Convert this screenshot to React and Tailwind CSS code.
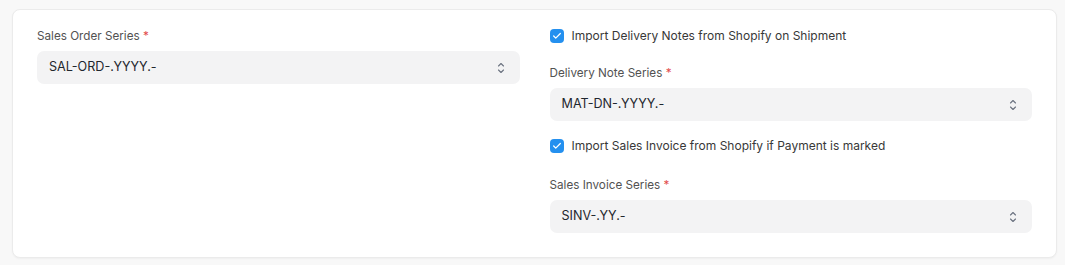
import { Check } from "lucide-react";

function SelectBox({ value }) {
  return (
    <div className="flex h-[33px] items-center justify-between rounded-[7px] bg-[#f3f3f4] pl-[12px] pr-[14px]">
      <span className="text-[12.6px] text-[#1f272e]">{value}</span>
      <svg width="10" height="14" viewBox="0 0 10 14" fill="none" className="text-[#6b7280]">
        <path d="M2.5 5 L5 2.5 L7.5 5" stroke="currentColor" strokeWidth="1.1" strokeLinecap="round" strokeLinejoin="round" />
        <path d="M2.5 9 L5 11.5 L7.5 9" stroke="currentColor" strokeWidth="1.1" strokeLinecap="round" strokeLinejoin="round" />
      </svg>
    </div>
  );
}

function FieldLabel({ children, className = "" }) {
  return (
    <div className={`h-[16px] text-[11.7px] leading-[16px] text-[#525252] mb-[7px] ${className}`}>
      {children} <span className="text-[#e24c4c]">*</span>
    </div>
  );
}

function CheckRow({ label, className = "" }) {
  return (
    <div className={`flex h-[16px] items-center gap-[8px] ${className}`}>
      <span className="flex h-[14px] w-[14px] items-center justify-center rounded-[4px] bg-[#2490ef]">
        <Check className="h-[10px] w-[10px] text-white" strokeWidth={3} />
      </span>
      <span className="text-[12px] leading-[16px] text-[#383838]">{label}</span>
    </div>
  );
}

export default function App() {
  return (
    <div
      className="h-[265px] w-[1065px] bg-[#f8f8f8] pl-[12px] pr-[8px] pt-[9px]"
      style={{ fontFamily: "Inter, 'Noto Sans', sans-serif" }}
    >
      <div className="h-[249px] rounded-[8px] border border-[#ebebeb] bg-white px-[24px] pt-[18px] shadow-[0_1px_2px_rgba(0,0,0,0.04)]">
        <div className="grid grid-cols-2 gap-x-[30px]">
          <div>
            <FieldLabel>Sales Order Series</FieldLabel>
            <SelectBox value="SAL-ORD-.YYYY.-" />
          </div>
          <div>
            <CheckRow label="Import Delivery Notes from Shopify on Shipment" />
            <FieldLabel className="mt-[21px]">Delivery Note Series</FieldLabel>
            <SelectBox value="MAT-DN-.YYYY.-" />
            <CheckRow className="mt-[17px]" label="Import Sales Invoice from Shopify if Payment is marked" />
            <FieldLabel className="mt-[23px]">Sales Invoice Series</FieldLabel>
            <SelectBox value="SINV-.YY.-" />
          </div>
        </div>
      </div>
    </div>
  );
}
